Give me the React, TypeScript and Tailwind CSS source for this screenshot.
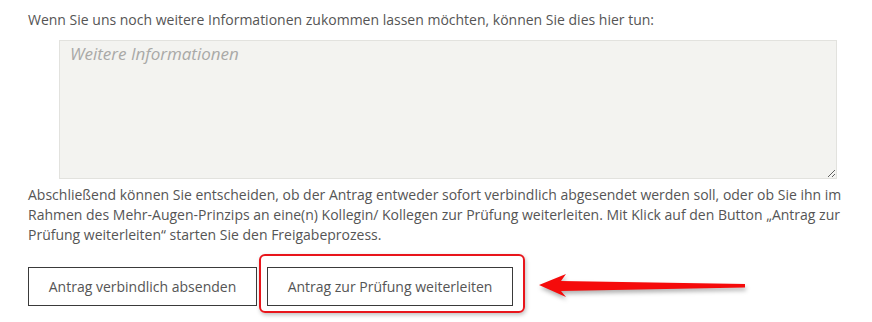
import React from "react";

export default function App() {
  return (
    <div
      className="relative w-[872px] h-[322px] bg-white pl-[28px] pt-[10px] text-[14px] leading-[20px] text-[#555555]"
      style={{ fontFamily: '"Open Sans", "Liberation Sans", sans-serif' }}
    >
      <p>Wenn Sie uns noch weitere Informationen zukommen lassen möchten, können Sie dies hier tun:</p>
      <textarea
        placeholder="Weitere Informationen"
        className="block mt-[10px] ml-[31px] w-[778px] h-[139px] bg-[#f3f3f0] border border-[#e2e2de] px-[10px] pt-[1px] text-[17px] leading-[24px] italic text-[#555] placeholder:text-[#a9a9a7] placeholder:italic outline-none"
        style={{ fontFamily: '"Open Sans", "Liberation Sans", sans-serif' }}
      />
      <p className="mt-[6px] w-[820px]">
        Abschließend können Sie entscheiden, ob der Antrag entweder sofort verbindlich abgesendet werden soll, oder ob Sie ihn im Rahmen des Mehr-Augen-Prinzips an eine(n) Kollegin/ Kollegen zur Prüfung weiterleiten. Mit Klick auf den Button „Antrag zur Prüfung weiterleiten“ starten Sie den Freigabeprozess.
      </p>
      <div className="mt-[22px] flex gap-[10px]">
        <button className="h-[39px] w-[229px] border border-[#3a3a3a] bg-white text-[14px] text-[#555]">
          Antrag verbindlich absenden
        </button>
        <div className="relative">
          <div className="absolute left-[-8px] top-[-13px] w-[266px] h-[59px] rounded-[6px] border-2 border-[#e8151b] shadow-[1px_2px_4px_rgba(0,0,0,0.25)]" />
          <button className="relative h-[39px] w-[246px] border border-[#3a3a3a] bg-white text-[14px] text-[#555]">
            Antrag zur Prüfung weiterleiten
          </button>
        </div>
      </div>
      <svg
        className="absolute left-[530px] top-[262px]"
        width="230"
        height="50"
        viewBox="0 0 230 50"
        style={{ filter: "drop-shadow(1px 3px 2px rgba(0,0,0,0.3))" }}
      >
        <path
          d="M9 23 L36 12 L31 19 L215 22 L215 25.5 L31 29 L36 35 Z"
          fill="#f50b0b"
        />
      </svg>
    </div>
  );
}
